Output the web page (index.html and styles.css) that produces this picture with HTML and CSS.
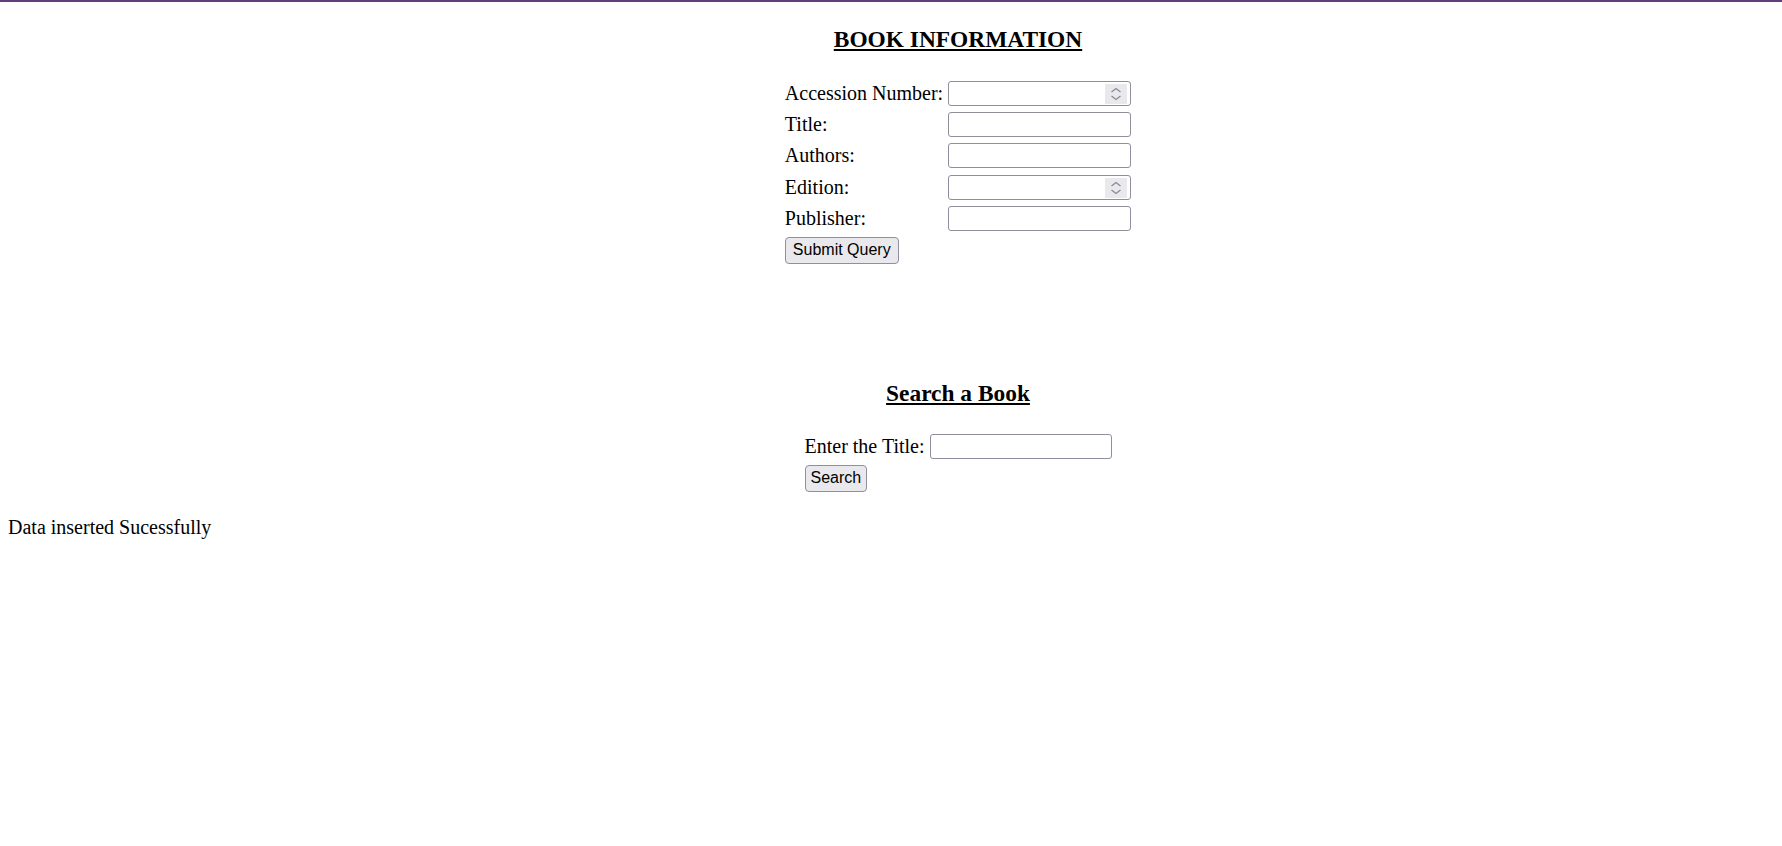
FILE: index.html
```html
<!DOCTYPE html>
<html lang="en">
<head>
<meta charset="utf-8">
<title>Book Information</title>
<link rel="stylesheet" href="styles.css">
</head>
<body>
<div class="topbar"></div>
<main class="page">
  <section class="panel">
    <h3 class="heading">BOOK INFORMATION</h3>
    <form class="form-grid book-form">
      <label class="label" for="acc">Accession Number:</label>
      <span class="spin-field">
        <input class="field" id="acc" type="text">
        <span class="spinner"><svg width="22" height="20" viewBox="0 0 22 20"><path d="M6.5 8 L11 4.5 L15.5 8" fill="none" stroke="#8a8a96" stroke-width="1.3"/><path d="M6.5 12 L11 15.5 L15.5 12" fill="none" stroke="#8a8a96" stroke-width="1.3"/></svg></span>
      </span>
      <label class="label" for="title">Title:</label>
      <input class="field" id="title" type="text">
      <label class="label" for="authors">Authors:</label>
      <input class="field" id="authors" type="text">
      <label class="label" for="edition">Edition:</label>
      <span class="spin-field">
        <input class="field" id="edition" type="text">
        <span class="spinner"><svg width="22" height="20" viewBox="0 0 22 20"><path d="M6.5 8 L11 4.5 L15.5 8" fill="none" stroke="#8a8a96" stroke-width="1.3"/><path d="M6.5 12 L11 15.5 L15.5 12" fill="none" stroke="#8a8a96" stroke-width="1.3"/></svg></span>
      </span>
      <label class="label" for="publisher">Publisher:</label>
      <input class="field" id="publisher" type="text">
      <button class="btn btn-submit" type="button">Submit Query</button>
    </form>
  </section>
  <section class="panel search-panel">
    <h3 class="heading">Search a Book</h3>
    <form class="form-grid search-form">
      <label class="label" for="stitle">Enter the Title:</label>
      <input class="field search-field" id="stitle" type="text">
      <button class="btn btn-search" type="button">Search</button>
    </form>
  </section>
  <p class="status">Data inserted Sucessfully</p>
</main>
</body>
</html>
```
FILE: styles.css
```css
html, body {
  margin: 0;
  padding: 0;
  background: #ffffff;
  color: #000000;
  font-family: "Liberation Serif", "Times New Roman", serif;
}

.topbar {
  height: 2px;
  background: #603f78;
}

.page {
  display: flex;
  flex-direction: column;
}

.panel {
  display: flex;
  flex-direction: column;
  align-items: center;
  padding-left: 134px;
}

.heading {
  margin: 23px 0 0;
  font-size: 23.4px;
  line-height: 28px;
  font-weight: 700;
  text-decoration: underline;
  text-decoration-thickness: 2px;
  text-underline-offset: 2px;
}

.form-grid {
  display: grid;
  grid-template-columns: auto 183px;
  column-gap: 5px;
  row-gap: 6.33px;
  align-items: center;
  margin: 27.7px 0 0;
}

.label {
  font-size: 20px;
  line-height: 23px;
  white-space: nowrap;
}

.field {
  box-sizing: border-box;
  display: block;
  width: 183px;
  height: 25px;
  margin: 0;
  padding: 0 3px;
  border: 1px solid #8f8f9d;
  border-radius: 3px;
  background: #ffffff;
  font: 16px "Liberation Sans", Arial, sans-serif;
}

.search-field {
  width: 182px;
}

.spin-field {
  position: relative;
  display: block;
  height: 25px;
}

.spinner {
  position: absolute;
  top: 3px;
  right: 4px;
  width: 22px;
  height: 20px;
  background: #e9e9ed;
  display: flex;
  align-items: center;
  justify-content: center;
}

.spinner svg {
  display: block;
}

.btn {
  grid-column: 1;
  justify-self: start;
  box-sizing: border-box;
  height: 26.3px;
  margin: 0;
  padding: 0 6px;
  border: 1px solid #8f8f9d;
  border-radius: 4px;
  background: #e9e9ed;
  color: #000000;
  font: 16px "Liberation Sans", Arial, sans-serif;
  line-height: 24px;
}

.btn-submit {
  padding: 0 7px;
}

.btn-search {
  padding: 0 5px;
}

.search-panel .heading {
  margin-top: 115px;
}

.search-form {
  grid-template-columns: auto 182px;
  margin-top: 27.4px;
}

.status {
  margin: 24.4px 0 0 8px;
  font-size: 20px;
  line-height: 23px;
}
```
